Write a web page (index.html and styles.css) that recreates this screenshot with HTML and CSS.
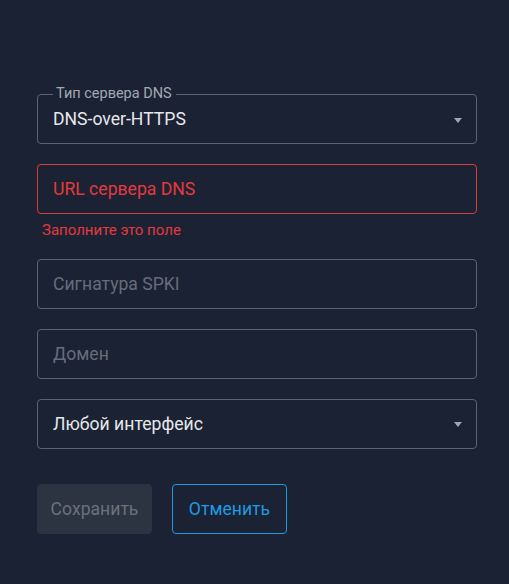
FILE: index.html
```html
<!DOCTYPE html>
<html lang="ru">
<head>
<meta charset="utf-8">
<link rel="stylesheet" href="styles.css">
</head>
<body>
<form class="form">
  <div class="field select outlined">
    <span class="legend">Тип сервера DNS</span>
    <span class="value">DNS-over-HTTPS</span>
    <span class="arrow"></span>
  </div>
  <div class="group">
    <div class="field error"><span class="placeholder">URL сервера DNS</span></div>
    <div class="helper">Заполните это поле</div>
  </div>
  <div class="field"><span class="placeholder">Сигнатура SPKI</span></div>
  <div class="field"><span class="placeholder">Домен</span></div>
  <div class="field select"><span class="value">Любой интерфейс</span><span class="arrow"></span></div>
  <div class="actions">
    <button type="button" class="btn btn-save">Сохранить</button>
    <button type="button" class="btn btn-cancel">Отменить</button>
  </div>
</form>
</body>
</html>
```

FILE: styles.css
```css
html, body {
  margin: 0;
  padding: 0;
  background: #1b2233;
  font-family: Roboto, "Liberation Sans", sans-serif;
}
.form {
  width: 440px;
  margin: 0 0 0 37px;
  padding-top: 94px;
  display: flex;
  flex-direction: column;
  gap: 20px;
}
.field {
  box-sizing: border-box;
  width: 440px;
  height: 50px;
  border: 1px solid #5b6272;
  border-radius: 4px;
  display: flex;
  align-items: center;
  padding: 0 15px;
  position: relative;
  font-size: 17.6px;
}
.legend {
  position: absolute;
  left: 15px;
  top: -9px;
  font-size: 14.5px;
  line-height: 16px;
  color: #a3a8b3;
  padding: 0 4px 0 3px;
  background: #1b2233;
}
.value {
  color: #e6e8ec;
}
.outlined .value {
  margin-top: -1px;
}
.arrow {
  position: absolute;
  right: 14px;
  top: 50%;
  width: 0;
  height: 0;
  border-left: 4px solid transparent;
  border-right: 4px solid transparent;
  border-top: 5px solid #a0a5ae;
  margin-top: -2px;
}
.outlined .arrow {
  margin-top: -1px;
}
.placeholder {
  color: #666d7a;
}
.error {
  border-color: #dd3a3f;
}
.error .placeholder {
  color: #e4393e;
}
.helper {
  color: #e4393e;
  font-size: 15px;
  margin: 7px 0 0 5px;
  line-height: 18px;
}
.actions {
  display: flex;
  gap: 20px;
  margin-top: 15px;
}
.btn {
  box-sizing: border-box;
  height: 50px;
  width: 115px;
  border-radius: 4px;
  font-family: Roboto, "Liberation Sans", sans-serif;
  font-size: 17.6px;
  padding: 0;
}
.btn-save {
  background: #2d3441;
  border: 1px solid #2d3441;
  color: #6a717d;
}
.btn-cancel {
  background: transparent;
  border: 1px solid #1c9be3;
  color: #1c9be3;
}
```
